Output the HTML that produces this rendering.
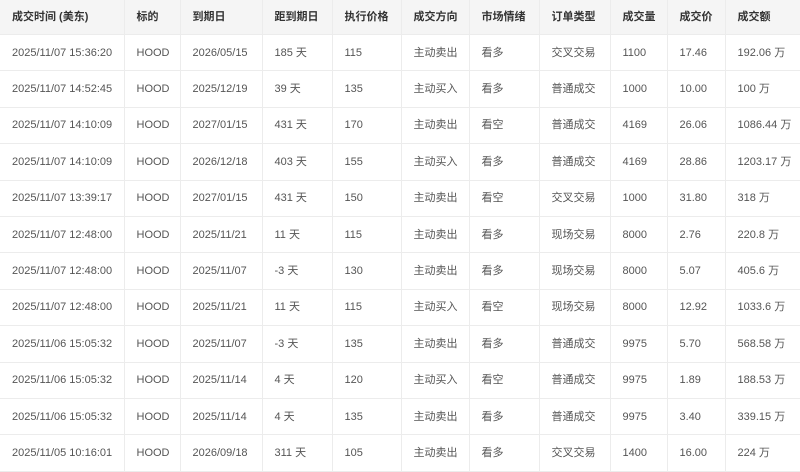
<!DOCTYPE html>
<html><head><style>
body{margin:0;width:800px;height:469px;overflow:hidden;background:#fff;font-family:"Liberation Sans","Noto Sans CJK SC",sans-serif;font-size:11px;color:#555}
table{border-collapse:collapse;table-layout:fixed;width:820px;font-size:11px}
td,th{border-right:1px solid #ececec;border-bottom:1px solid #ececec;padding:0 0 0 12px;text-align:left;white-space:nowrap;overflow:hidden;height:35.4px;vertical-align:middle;line-height:14px}
th{background:#f5f5f5;font-weight:bold;color:#333;height:34px}
</style></head><body><table>
<colgroup><col style="width:124px"><col style="width:56px"><col style="width:82px"><col style="width:70px"><col style="width:69px"><col style="width:68px"><col style="width:70px"><col style="width:71px"><col style="width:57px"><col style="width:58px"><col style="width:95px"></colgroup>
<tr><th>成交时间 (美东)</th><th>标的</th><th>到期日</th><th>距到期日</th><th>执行价格</th><th>成交方向</th><th>市场情绪</th><th>订单类型</th><th>成交量</th><th>成交价</th><th>成交额</th></tr>
<tr><td>2025/11/07 15:36:20</td><td>HOOD</td><td>2026/05/15</td><td>185 天</td><td>115</td><td>主动卖出</td><td>看多</td><td>交叉交易</td><td>1100</td><td>17.46</td><td>192.06 万</td></tr>
<tr><td>2025/11/07 14:52:45</td><td>HOOD</td><td>2025/12/19</td><td>39 天</td><td>135</td><td>主动买入</td><td>看多</td><td>普通成交</td><td>1000</td><td>10.00</td><td>100 万</td></tr>
<tr><td>2025/11/07 14:10:09</td><td>HOOD</td><td>2027/01/15</td><td>431 天</td><td>170</td><td>主动卖出</td><td>看空</td><td>普通成交</td><td>4169</td><td>26.06</td><td>1086.44 万</td></tr>
<tr><td>2025/11/07 14:10:09</td><td>HOOD</td><td>2026/12/18</td><td>403 天</td><td>155</td><td>主动买入</td><td>看多</td><td>普通成交</td><td>4169</td><td>28.86</td><td>1203.17 万</td></tr>
<tr><td>2025/11/07 13:39:17</td><td>HOOD</td><td>2027/01/15</td><td>431 天</td><td>150</td><td>主动卖出</td><td>看空</td><td>交叉交易</td><td>1000</td><td>31.80</td><td>318 万</td></tr>
<tr><td>2025/11/07 12:48:00</td><td>HOOD</td><td>2025/11/21</td><td>11 天</td><td>115</td><td>主动卖出</td><td>看多</td><td>现场交易</td><td>8000</td><td>2.76</td><td>220.8 万</td></tr>
<tr><td>2025/11/07 12:48:00</td><td>HOOD</td><td>2025/11/07</td><td>-3 天</td><td>130</td><td>主动卖出</td><td>看多</td><td>现场交易</td><td>8000</td><td>5.07</td><td>405.6 万</td></tr>
<tr><td>2025/11/07 12:48:00</td><td>HOOD</td><td>2025/11/21</td><td>11 天</td><td>115</td><td>主动买入</td><td>看空</td><td>现场交易</td><td>8000</td><td>12.92</td><td>1033.6 万</td></tr>
<tr><td>2025/11/06 15:05:32</td><td>HOOD</td><td>2025/11/07</td><td>-3 天</td><td>135</td><td>主动卖出</td><td>看多</td><td>普通成交</td><td>9975</td><td>5.70</td><td>568.58 万</td></tr>
<tr><td>2025/11/06 15:05:32</td><td>HOOD</td><td>2025/11/14</td><td>4 天</td><td>120</td><td>主动买入</td><td>看空</td><td>普通成交</td><td>9975</td><td>1.89</td><td>188.53 万</td></tr>
<tr><td>2025/11/06 15:05:32</td><td>HOOD</td><td>2025/11/14</td><td>4 天</td><td>135</td><td>主动卖出</td><td>看多</td><td>普通成交</td><td>9975</td><td>3.40</td><td>339.15 万</td></tr>
<tr><td>2025/11/05 10:16:01</td><td>HOOD</td><td>2026/09/18</td><td>311 天</td><td>105</td><td>主动卖出</td><td>看多</td><td>交叉交易</td><td>1400</td><td>16.00</td><td>224 万</td></tr>
</table></body></html>
